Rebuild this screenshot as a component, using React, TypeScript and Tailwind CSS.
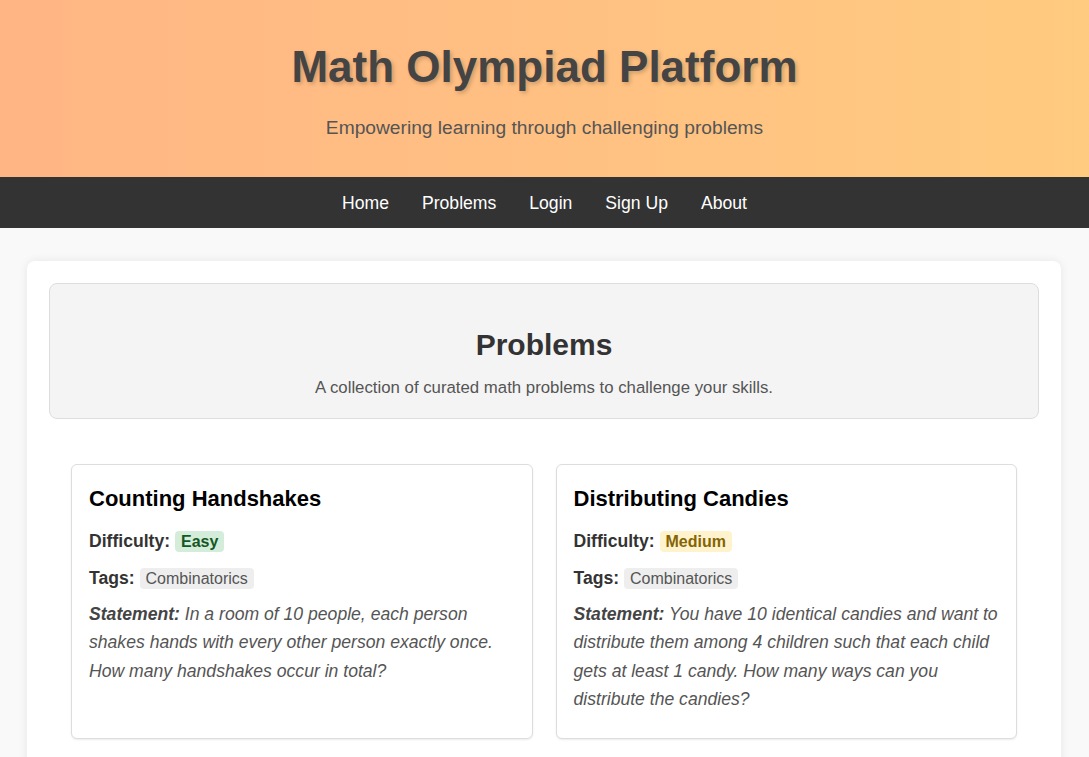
import React from 'react';

type Problem = {
  title: string;
  difficulty: 'Easy' | 'Medium';
  tags: string[];
  statement: string;
};

const problems: Problem[] = [
  {
    title: 'Counting Handshakes',
    difficulty: 'Easy',
    tags: ['Combinatorics'],
    statement:
      'In a room of 10 people, each person shakes hands with every other person exactly once. How many handshakes occur in total?',
  },
  {
    title: 'Distributing Candies',
    difficulty: 'Medium',
    tags: ['Combinatorics'],
    statement:
      'You have 10 identical candies and want to distribute them among 4 children such that each child gets at least 1 candy. How many ways can you distribute the candies?',
  },
];

const navLinks = ['Home', 'Problems', 'Login', 'Sign Up', 'About'];

const ProblemCard: React.FC<{ problem: Problem }> = ({ problem }) => {
  const badge =
    problem.difficulty === 'Easy'
      ? 'bg-[#d4edda] text-[#155724]'
      : 'bg-[#fff3cd] text-[#856404]';

  return (
    <div className="bg-white border border-[#ddd] rounded-[6px] shadow-[0_1px_2px_rgba(0,0,0,0.08)] px-[17px] pt-[21px] pb-[25px]">
      <h3 className="text-[22px] leading-[26px] font-bold text-black mb-[15px]">{problem.title}</h3>
      <p className="text-[17.6px] leading-[28px] text-[#333] mb-[8px]">
        <strong>Difficulty:</strong>{' '}
        <span className={`${badge} text-[16px] font-bold px-[6px] py-[2px] rounded-[4px]`}>
          {problem.difficulty}
        </span>
      </p>
      <p className="text-[17.6px] leading-[28px] text-[#333] mb-[7px]">
        <strong>Tags:</strong>{' '}
        {problem.tags.map((tag) => (
          <span key={tag} className="bg-[#eee] text-[#555] text-[16px] px-[6px] py-[2px] rounded-[4px]">
            {tag}
          </span>
        ))}
      </p>
      <p className="text-[17.6px] leading-[28.3px] text-[#555] italic">
        <strong className="text-[#444]">Statement:</strong> {problem.statement}
      </p>
    </div>
  );
};

const App: React.FC = () => {
  return (
    <div className="min-h-screen bg-[#f9f9f9] font-['Liberation_Sans',Arial,sans-serif]">
      {/* Header */}
      <header className="bg-gradient-to-r from-[#ffb584] to-[#ffcb80] text-center pt-[40px] pb-[37px]">
        <h1 className="text-[44px] leading-[53px] font-bold text-[#444] [text-shadow:2px_2px_4px_rgba(0,0,0,0.2)]">
          Math Olympiad Platform
        </h1>
        <p className="mt-[23px] text-[19.2px] leading-[24px] text-[#555]">
          Empowering learning through challenging problems
        </p>
      </header>

      {/* Nav */}
      <nav className="bg-[#333] h-[51px] flex items-center justify-center gap-[33px]">
        {navLinks.map((link) => (
          <a key={link} href="#" className="text-white text-[17.6px] leading-[22px]">
            {link}
          </a>
        ))}
      </nav>

      {/* Main */}
      <main className="pt-[33px]">
        <div className="w-[1034px] ml-[27px] bg-white rounded-[8px] shadow-[0_0_10px_rgba(0,0,0,0.08)] p-[22px]">
          <section className="bg-[#f4f4f4] border border-[#ddd] rounded-[8px] h-[136px] flex flex-col items-center justify-center text-center">
            <h2 className="text-[30px] leading-[36px] font-bold text-[#333] mt-[22px]">Problems</h2>
            <p className="mt-[15px] text-[16.8px] leading-[20px] text-[#555]">
              A collection of curated math problems to challenge your skills.
            </p>
          </section>

          <div className="grid grid-cols-2 gap-[23px] px-[22px] pt-[45px] pb-[22px]">
            {problems.map((p) => (
              <ProblemCard key={p.title} problem={p} />
            ))}
          </div>
        </div>
      </main>
    </div>
  );
};

export default App;
